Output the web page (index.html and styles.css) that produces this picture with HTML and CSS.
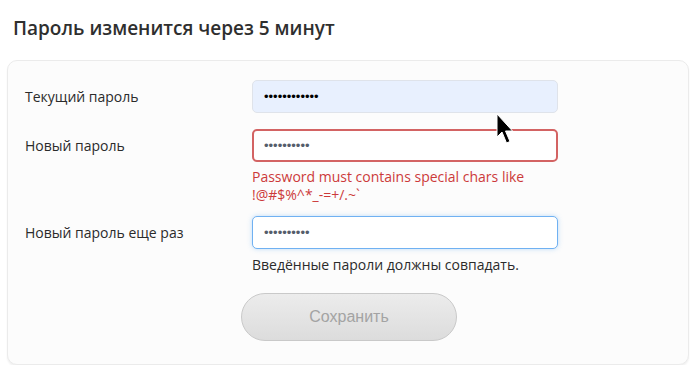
FILE: index.html
```html
<!DOCTYPE html>
<html lang="ru">
<head>
    <meta charset="UTF-8">
    <meta name="viewport" content="width=device-width, initial-scale=1.0">
    <title>Смена пароля</title>
    <link rel="stylesheet" href="styles.css">
</head>
<body>

<h2 class="title">Пароль изменится через 5 минут</h2>

<!-- Форма смены пароля -->
<div class="card">
    <div class="row">
        <label for="current">Текущий пароль</label>
        <div class="field">
            <input id="current" class="input autofill" type="password" value="123456789012">
        </div>
    </div>

    <div class="row">
        <label for="newPass">Новый пароль</label>
        <div class="field">
            <input id="newPass" class="input error" type="password" value="1234567890">
            <div class="msg msg-error">Password must contains special chars like<br>!@#$%^*_-=+/.~`</div>
        </div>
    </div>

    <div class="row">
        <label for="repeat">Новый пароль еще раз</label>
        <div class="field">
            <input id="repeat" class="input focus" type="password" value="1234567890">
            <div class="msg">Введённые пароли должны совпадать.</div>
        </div>
    </div>

    <div class="actions">
        <button class="save" disabled>Сохранить</button>
    </div>
</div>

<!-- курсор мыши на скриншоте -->
<svg class="cursor" width="20" height="32" viewBox="0 0 20 32">
    <path d="M1 1 L1 24 L6 19 L10.5 30 L14 28.5 L9.5 18 L16.5 18 Z" fill="#000" stroke="#fff" stroke-width="1"/>
</svg>

</body>
</html>
```

FILE: styles.css
```css
body {
    font-family: "Open Sans", "Noto Sans", sans-serif;
    margin: 0;
    background: #fff;
    color: #2b2b2b;
    position: relative;
}
.title {
    margin: 0;
    padding: 14px 13px 0;
    font-size: 19px;
    font-weight: 600;
    line-height: 28px;
    color: #2f2f2f;
}
.card {
    margin: 18px 11px 0 7px;
    padding: 19px 17px 23px;
    background: #fcfcfc;
    border: 1px solid #ebebeb;
    border-radius: 10px;
    box-shadow: 0 2px 2px rgba(0, 0, 0, 0.06);
}
.row {
    display: grid;
    grid-template-columns: 227px 306px;
    margin-bottom: 16px;
}
.row label {
    font-size: 14px;
    height: 33px;
    line-height: 33px;
    color: #2b2b2b;
}
.input {
    box-sizing: border-box;
    width: 306px;
    height: 33px;
    padding: 0 11px;
    font-size: 13px;
    font-family: "Liberation Sans", sans-serif;
    border: 1px solid #dfe3ea;
    border-radius: 5px;
    background: #fff;
    color: #555d6b;
    outline: none;
}
.autofill {
    background: #e8f0fe;
    color: #000;
}
.error {
    border: 2px solid #d36363;
    padding: 0 10px;
}
.focus {
    border-color: #70b1f2;
    box-shadow: 0 0 5px rgba(112, 177, 242, 0.45);
}
.msg {
    font-size: 14px;
    line-height: 19px;
    margin-top: 6px;
    margin-bottom: -6px;
    color: #2b2b2b;
}
.msg-error {
    line-height: 18px;
    margin-bottom: -4px;
    color: #cc3a3a;
}
.actions {
    padding-left: 216px;
    margin-top: 25px;
}
.save {
    box-sizing: border-box;
    width: 216px;
    height: 48px;
    border-radius: 24px;
    border: 1px solid #c9c9c9;
    background: linear-gradient(#ececec, #dcdcdc);
    color: #a3a3a3;
    font-family: "Liberation Sans", Arial, sans-serif;
    font-size: 16px;
}
.cursor {
    position: absolute;
    left: 496px;
    top: 113px;
}
```
